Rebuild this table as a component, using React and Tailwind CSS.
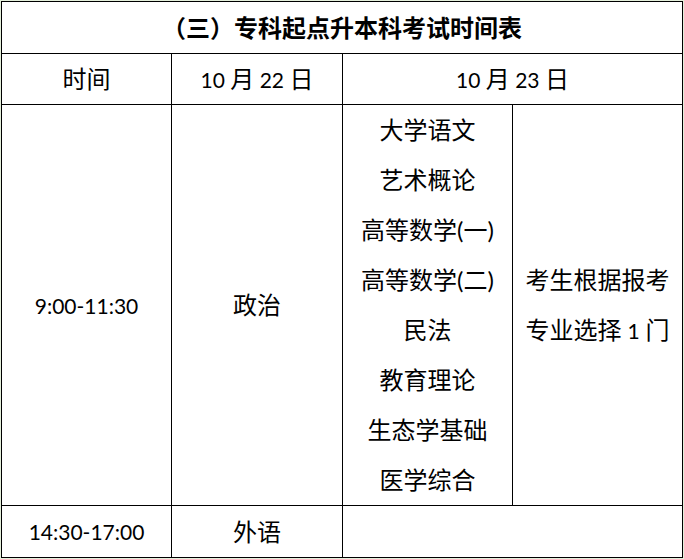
import React from "react";

export default function App() {
  const list = ["大学语文", "艺术概论", "高等数学(一)", "高等数学(二)", "民法", "教育理论", "生态学基础", "医学综合"];
  const cell = "bg-white flex items-center justify-center";
  return (
    <div className="w-[684px] h-[559px] bg-[#e4efdb] pl-px pt-px font-['Lato','Noto_Sans_CJK_SC',sans-serif] text-black text-[21px] leading-none">
      <div className="grid w-[682px] grid-cols-[169px_170px_169px_169px] grid-rows-[51px_50px_400px_51px] gap-px bg-black p-px">
        <div className={`${cell} col-span-4 font-bold text-[24px]`}>（三）专科起点升本科考试时间表</div>
        <div className={`${cell} text-[24px]`}>时间</div>
        <div className={cell}>
          <span>10 <span className="text-[24px]">月</span> 22 <span className="text-[24px]">日</span></span>
        </div>
        <div className={`${cell} col-span-2`}>
          <span>10 <span className="text-[24px]">月</span> 23 <span className="text-[24px]">日</span></span>
        </div>
        <div className={cell}>9:00-11:30</div>
        <div className={`${cell} text-[24px]`}>政治</div>
        <div className={`${cell} flex-col text-[24px]`}>
          {list.map((t) => (
            <div key={t} className="h-[50px] flex items-center justify-center">
              {t}
            </div>
          ))}
        </div>
        <div className={`${cell} flex-col text-[24px]`}>
          <div className="h-[50px] flex items-center">考生根据报考</div>
          <div className="h-[50px] flex items-center">
            专业选择<span className="text-[21px] mx-[6px]">1</span>门
          </div>
        </div>
        <div className={cell}>14:30-17:00</div>
        <div className={`${cell} text-[24px]`}>外语</div>
        <div className={`${cell} col-span-2`}></div>
      </div>
    </div>
  );
}
